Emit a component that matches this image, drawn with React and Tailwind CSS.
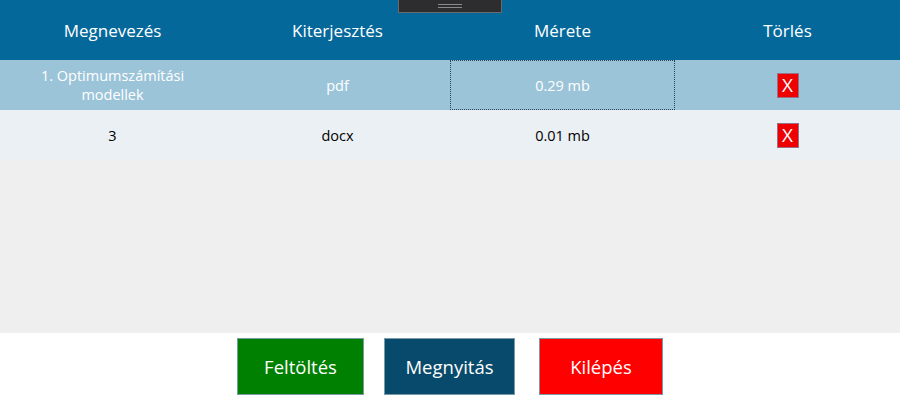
import React from "react";

const rows = [
  { name: "1. Optimumszámítási modellek", ext: "pdf", size: "0.29 mb", selected: true },
  { name: "3", ext: "docx", size: "0.01 mb", selected: false },
];

const App = () => {
  return (
    <div
      className="w-[900px] h-[403px] flex flex-col bg-white relative"
      style={{ fontFamily: '"Segoe UI", "Open Sans", "Noto Sans", sans-serif' }}
    >
      {/* fogantyú */}
      <div className="absolute left-[398px] top-0 w-[104px] h-[13px] bg-[#2d2d30] border border-[#6a6a6a] border-t-0 flex flex-col items-center justify-center gap-[2px]">
        <div className="w-[24px] h-px bg-[#8a8a8a]"></div>
        <div className="w-[24px] h-px bg-[#8a8a8a]"></div>
      </div>

      {/* fejléc */}
      <div className="h-[60px] bg-[#05689b] grid grid-cols-4 items-center text-white text-[17px] pt-[2px]">
        <div className="text-center">Megnevezés</div>
        <div className="text-center">Kiterjesztés</div>
        <div className="text-center">Mérete</div>
        <div className="text-center">Törlés</div>
      </div>

      {/* sorok */}
      <div className="h-[273px] bg-[#efefef] flex flex-col">
        {rows.map((r, i) => (
          <div
            key={i}
            className={`h-[50px] grid grid-cols-4 items-center text-[14.5px] leading-[19px] ${
              r.selected ? "bg-[#9bc4d9] text-white" : "bg-[#ebf0f4] text-black"
            }`}
          >
            <div className="text-center px-8">{r.name}</div>
            <div className="text-center">{r.ext}</div>
            <div
              className={`h-full flex items-center justify-center ${
                r.selected ? "border border-dotted border-[#2b3f5c]" : ""
              }`}
            >
              {r.size}
            </div>
            <div className="flex justify-center">
              <div className="w-[22px] h-[25px] bg-[#ee0000] border border-[#9a7088] text-white text-[19px] leading-none flex items-center justify-center">
                X
              </div>
            </div>
          </div>
        ))}
      </div>

      {/* gombok */}
      <div className="flex-1 flex justify-center items-start pt-[5px] gap-[20px] text-white text-[18.5px]">
        <button className="w-[127px] h-[57px] bg-[#008000] border border-[#7a9aa8]">Feltöltés</button>
        <button className="w-[131px] h-[57px] bg-[#084a6b] border border-[#7a9aa8] mr-[4px]">Megnyitás</button>
        <button className="w-[124px] h-[57px] bg-[#ff0000] border border-[#7a9aa8]">Kilépés</button>
      </div>
    </div>
  );
};

export default App;
